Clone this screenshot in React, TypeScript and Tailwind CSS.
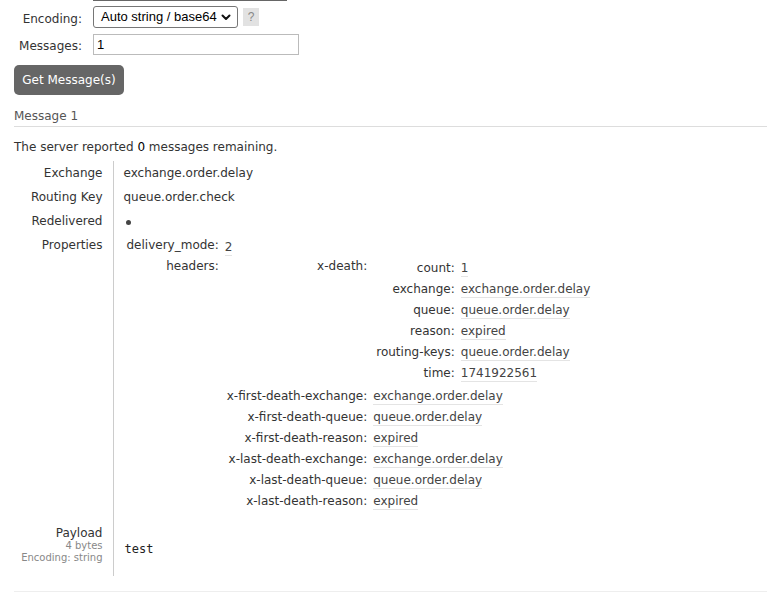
import React from "react";

type Pair = [string, React.ReactNode];

function Val({ children }: { children: React.ReactNode }) {
  return <span className="border-b border-[#e4e4e4] pb-[1px] text-[#444]">{children}</span>;
}

function MiniTable({ rows }: { rows: Pair[] }) {
  return (
    <table className="border-collapse">
      <tbody>
        {rows.map(([k, v]) => (
          <tr key={k}>
            <td className="whitespace-nowrap py-[3px] pl-[3px] pr-[4px] text-right align-top leading-[15px]">{k}:</td>
            <td className="whitespace-nowrap py-[3px] pl-[2px] align-top leading-[15px]">{v}</td>
          </tr>
        ))}
      </tbody>
    </table>
  );
}

export default function App() {
  const xDeath: Pair[] = [
    ["count", <Val>1</Val>],
    ["exchange", <Val>exchange.order.delay</Val>],
    ["queue", <Val>queue.order.delay</Val>],
    ["reason", <Val>expired</Val>],
    ["routing-keys", <Val>queue.order.delay</Val>],
    ["time", <Val>1741922561</Val>],
  ];

  const headerRest: Pair[] = [
    ["x-first-death-exchange", <Val>exchange.order.delay</Val>],
    ["x-first-death-queue", <Val>queue.order.delay</Val>],
    ["x-first-death-reason", <Val>expired</Val>],
    ["x-last-death-exchange", <Val>exchange.order.delay</Val>],
    ["x-last-death-queue", <Val>queue.order.delay</Val>],
    ["x-last-death-reason", <Val>expired</Val>],
  ];

  return (
    <div className="min-h-screen bg-white pl-[14px] text-[12px] text-[#333] font-['DejaVu_Sans',Verdana,sans-serif]">
      {/* bottom edge of the control above */}
      <div className="ml-[79px] h-px w-[194px] bg-[#666]" />

      {/* form */}
      <div className="mt-[5px] flex h-[22px] items-center">
        <div className="relative top-[2px] w-[68px] text-right leading-[15px]">Encoding:</div>
        <div className="ml-[11px] flex h-[22px] w-[145px] items-center justify-between rounded-[3px] border border-[#767676] pl-[7px] pr-[6px] text-[13px] whitespace-nowrap text-black font-['Liberation_Sans',Arial,sans-serif]">
          <span>Auto string / base64</span>
          <svg width="10" height="7" viewBox="0 0 10 7" fill="none">
            <path d="M1.5 1.5 5 5l3.5-3.5" stroke="#111" strokeWidth="2" strokeLinecap="round" strokeLinejoin="round" />
          </svg>
        </div>
        <div className="ml-[5px] flex h-[18px] w-[16px] items-center justify-center bg-[#e2e2e2] text-[12px] text-[#888] font-['Liberation_Sans',Arial,sans-serif]">?</div>
      </div>

      <div className="mt-[6px] flex h-[21px] items-center">
        <div className="relative top-[2px] w-[68px] text-right leading-[15px]">Messages:</div>
        <div className="ml-[11px] flex h-[21px] w-[206px] items-center border border-[#bbb] pl-[3px] text-[13px] text-black font-['Liberation_Sans',Arial,sans-serif]">1</div>
      </div>

      <button className="mt-[10px] flex h-[30px] w-[110px] items-center justify-center rounded-[5px] bg-[#666] text-[12px] text-white">
        Get Message(s)
      </button>

      {/* message */}
      <div className="mt-[14px] border-b border-[#ddd] pb-[2px] leading-[15px] text-[#555]">Message 1</div>

      <p className="mt-[13px] leading-[15px]">
        The server reported <span className="text-black">0</span> messages remaining.
      </p>

      <table className="mt-[6px] border-collapse">
        <tbody>
          {[
            ["Exchange", "exchange.order.delay"],
            ["Routing Key", "queue.order.check"],
          ].map(([k, v]) => (
            <tr key={k}>
              <th className="w-[99px] py-[5px] pr-[10px] text-right align-top font-normal leading-[14px]">{k}</th>
              <td className="border-l border-[#ccc] py-[5px] pl-[10px] leading-[14px]">{v}</td>
            </tr>
          ))}
          <tr>
            <th className="py-[5px] pr-[10px] text-right align-top font-normal leading-[14px]">Redelivered</th>
            <td className="border-l border-[#ccc] py-[5px] pl-[12px] leading-[14px]">
              <span className="inline-block h-[5px] w-[5px] rounded-full bg-[#444]" />
            </td>
          </tr>
          <tr>
            <th className="py-[5px] pr-[10px] text-right align-top font-normal leading-[14px]">Properties</th>
            <td className="border-l border-[#ccc] pb-[10px] pl-[10px] pt-[1px] align-top">
              <table className="border-collapse">
                <tbody>
                  <tr>
                    <td className="whitespace-nowrap py-[3px] pl-[3px] pr-[4px] text-right align-top leading-[16px]">delivery_mode:</td>
                    <td className="py-[3px] pl-[2px] align-top leading-[16px]">
                      <span className="relative top-[2px]"><Val>2</Val></span>
                    </td>
                  </tr>
                  <tr>
                    <td className="py-[3px] pr-[4px] text-right align-top leading-[15px]">headers:</td>
                    <td className="pl-[1px] align-top">
                      <table className="border-collapse">
                        <tbody>
                          <tr>
                            <td className="py-[3px] pr-[4px] text-right align-top leading-[15px]">x-death:</td>
                            <td className="py-[2px] pl-[2px] align-top">
                              <MiniTable rows={xDeath} />
                            </td>
                          </tr>
                          {headerRest.map(([k, v]) => (
                            <tr key={k}>
                              <td className="whitespace-nowrap py-[3px] pl-[3px] pr-[4px] text-right align-top leading-[15px]">{k}:</td>
                              <td className="whitespace-nowrap py-[3px] pl-[2px] align-top leading-[15px]">{v}</td>
                            </tr>
                          ))}
                        </tbody>
                      </table>
                    </td>
                  </tr>
                </tbody>
              </table>
            </td>
          </tr>
          <tr>
            <th className="pb-[12px] pr-[10px] pt-[4px] text-right align-top font-normal">
              <div className="leading-[14px]">Payload</div>
              <div className="text-[10px] leading-[12px] text-[#888]">4 bytes</div>
              <div className="text-[10px] leading-[12px] text-[#888]">Encoding: string</div>
            </th>
            <td className="border-l border-[#ccc] pl-[11px] align-middle text-[12px] font-['DejaVu_Sans_Mono',monospace] text-[#222]">
              test
            </td>
          </tr>
        </tbody>
      </table>

      <div className="mt-[15px] border-t border-[#eee]" />
    </div>
  );
}
